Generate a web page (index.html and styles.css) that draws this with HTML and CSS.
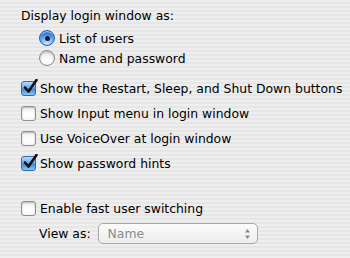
FILE: index.html
```html
<!DOCTYPE html>
<html lang="en">
<head>
    <meta charset="UTF-8">
    <title>Login Options</title>
    <link rel="stylesheet" href="styles.css">
</head>
<body>

<div class="panel">
    <div class="heading">Display login window as:</div>

    <!-- login window style -->
    <div class="radios">
        <div class="row radio-row">
            <span class="radio on"><span class="dot"></span></span>
            <span>List of users</span>
        </div>
        <div class="row radio-row">
            <span class="radio"></span>
            <span>Name and password</span>
        </div>
    </div>

    <div class="checks">
        <div class="row">
            <span class="check on">
                <svg class="tick" width="16" height="16" viewBox="0 0 16 16"><path d="M3 8.5 L6.5 12.5 L14.5 1" fill="none" stroke="#111" stroke-width="2.6" stroke-linecap="round" stroke-linejoin="round"/></svg>
            </span>
            <span>Show the Restart, Sleep, and Shut Down buttons</span>
        </div>
        <div class="row">
            <span class="check"></span>
            <span>Show Input menu in login window</span>
        </div>
        <div class="row">
            <span class="check"></span>
            <span>Use VoiceOver at login window</span>
        </div>
        <div class="row">
            <span class="check on">
                <svg class="tick" width="16" height="16" viewBox="0 0 16 16"><path d="M3 8.5 L6.5 12.5 L14.5 1" fill="none" stroke="#111" stroke-width="2.6" stroke-linecap="round" stroke-linejoin="round"/></svg>
            </span>
            <span>Show password hints</span>
        </div>
    </div>

    <!-- fast user switching -->
    <div class="switching">
        <div class="row">
            <span class="check"></span>
            <span>Enable fast user switching</span>
        </div>
        <div class="row view-row">
            <span class="view-label">View as:</span>
            <div class="popup">
                <span class="popup-text">Name</span>
                <span class="popup-arrows">
                    <svg width="7" height="12" viewBox="0 0 7 12"><path d="M3.5 1 L6 4.5 L1 4.5 Z M3.5 11 L6 7.5 L1 7.5 Z" fill="#8a8a8a"/></svg>
                </span>
            </div>
        </div>
    </div>
</div>

</body>
</html>
```

FILE: styles.css
```css
body {
    margin: 0;
    padding: 0;
    width: 350px;
    height: 258px;
    overflow: hidden;
    font-family: "DejaVu Sans", "Lucida Grande", sans-serif;
    font-size: 12.4px;
    color: #000;
    background: repeating-linear-gradient(to bottom, #eeeeee 0, #eeeeee 2px, #e6e6e6 2px, #e6e6e6 4px);
}
.panel {
    padding: 6px 0 0 21px;
}
.heading {
    height: 20px;
    line-height: 20px;
}
.row {
    display: flex;
    align-items: center;
    gap: 4px;
    height: 25px;
}
.radios {
    margin-top: 2px;
    margin-left: 18px;
}
.radio-row {
    height: 20px;
}
.radio {
    width: 14px;
    height: 14px;
    border-radius: 50%;
    border: 1px solid #8c8c8c;
    background: linear-gradient(to bottom, #e6e6e6, #ffffff 70%, #f4f4f4);
    box-shadow: inset 0 1px 2px rgba(0, 0, 0, 0.25);
    display: flex;
    align-items: center;
    justify-content: center;
    flex: none;
}
.radio.on {
    border-color: #2a5da8;
    background: radial-gradient(circle at 50% 90%, #c6e6ff 0, #6fb0f0 45%, #2f79d4 70%, #5a9ee6 100%);
    box-shadow: inset 0 1px 1px rgba(255, 255, 255, 0.6);
}
.radio .dot {
    width: 5px;
    height: 5px;
    border-radius: 50%;
    background: #0e1d33;
}
.checks {
    margin-top: 8px;
}
.check {
    position: relative;
    width: 13px;
    height: 13px;
    border-radius: 3px;
    border: 1px solid #8e8e8e;
    background: linear-gradient(to bottom, #f2f2f2, #ffffff 60%, #f6f6f6);
    box-shadow: inset 0 1px 2px rgba(0, 0, 0, 0.25);
    flex: none;
}
.check.on {
    border-color: #3a67a8;
    background: linear-gradient(to bottom, #b5dbfb 0, #6aaef0 45%, #3a8ae0 55%, #8cc6f6 100%);
    box-shadow: none;
}
.tick {
    position: absolute;
    left: 0;
    top: -3px;
}
.switching {
    margin-top: 20px;
}
.view-row {
    padding-left: 18px;
    gap: 7px;
}
.popup {
    display: flex;
    align-items: center;
    width: 158px;
    height: 19px;
    border: 1px solid #a8a8a8;
    border-radius: 5px;
    background: linear-gradient(to bottom, #fbfbfb, #ededed);
}
.popup-text {
    flex: 1;
    padding-left: 9px;
    color: #8c8c8c;
}
.popup-arrows {
    width: 19px;
    height: 19px;
    display: flex;
    align-items: center;
    justify-content: center;
}
```
